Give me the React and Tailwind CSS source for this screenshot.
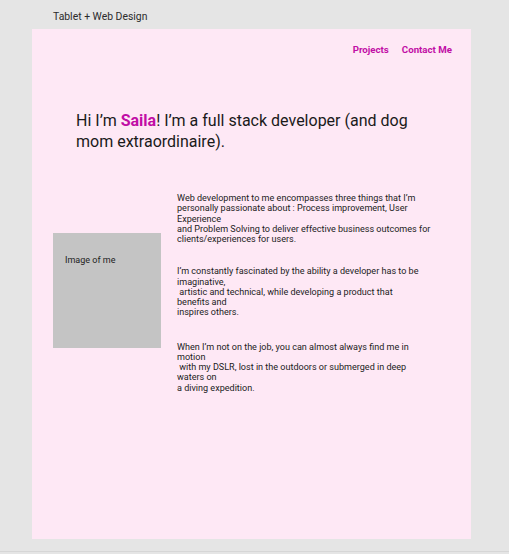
import React from 'react';

const font = { fontFamily: 'Roboto, "Noto Sans", sans-serif' };

const paragraphs = [
  [
    'Web development to me encompasses three things that I’m',
    'personally passionate about : Process improvement, User',
    'Experience',
    'and Problem Solving to deliver effective business outcomes for',
    'clients/experiences for users.',
  ],
  [
    'I’m constantly fascinated by the ability a developer has to be',
    'imaginative,',
    '\u00a0artistic and technical, while developing a product that',
    'benefits and',
    'inspires others.',
  ],
  [
    'When I’m not on the job, you can almost always find me in',
    'motion',
    '\u00a0with my DSLR, lost in the outdoors or submerged in deep',
    'waters on',
    'a diving expedition.',
  ],
];

const Paragraph = ({ lines, className = '' }) => (
  <p className={`text-[9.05px] leading-[10.25px] text-[#1c1c1c] whitespace-nowrap ${className}`}>
    {lines.map((line, i) => (
      <span key={i} className="block">
        {line}
      </span>
    ))}
  </p>
);

export default function App() {
  return (
    <div
      className="w-[509px] h-[554px] bg-[#e5e5e5] overflow-hidden relative"
      style={font}
    >
      {/* Canvas label */}
      <div className="pl-[53px] pt-[10px] h-[29px] text-[10.4px] leading-[13px] text-[#2b2b2b]">
        Tablet + Web Design
      </div>

      {/* Frame */}
      <div className="ml-[32px] w-[439px] h-[510px] bg-[#fee8f5]">
        {/* Nav */}
        <nav className="flex justify-end gap-[13px] pr-[19px] pt-[15px] text-[9.7px] leading-[12px] font-bold text-[#c10ea5]">
          <span>Projects</span>
          <span>Contact Me</span>
        </nav>

        {/* Heading */}
        <h1 className="mt-[54px] pl-[44px] text-[16px] leading-[21px] font-normal text-[#1a1a1a]">
          Hi I’m <span className="font-bold text-[#c10ea5]">Saila</span>! I’m a full stack developer (and dog
          <br />
          mom extraordinaire).
        </h1>

        {/* About row */}
        <div className="mt-[41px] flex items-start pl-[21px]">
          <div className="mt-[40px] w-[108px] h-[115px] bg-[#c4c4c4] pl-[12px] pt-[22px] text-[9px] leading-[10px] text-[#222]">
            Image of me
          </div>
          <div className="ml-[16px]">
            <Paragraph lines={paragraphs[0]} />
            <Paragraph lines={paragraphs[1]} className="mt-[22px]" />
            <Paragraph lines={paragraphs[2]} className="mt-[24px]" />
          </div>
        </div>
      </div>

      <div className="absolute left-0 right-0 top-[551px] h-px bg-[#d6d6d6]" />
    </div>
  );
}
